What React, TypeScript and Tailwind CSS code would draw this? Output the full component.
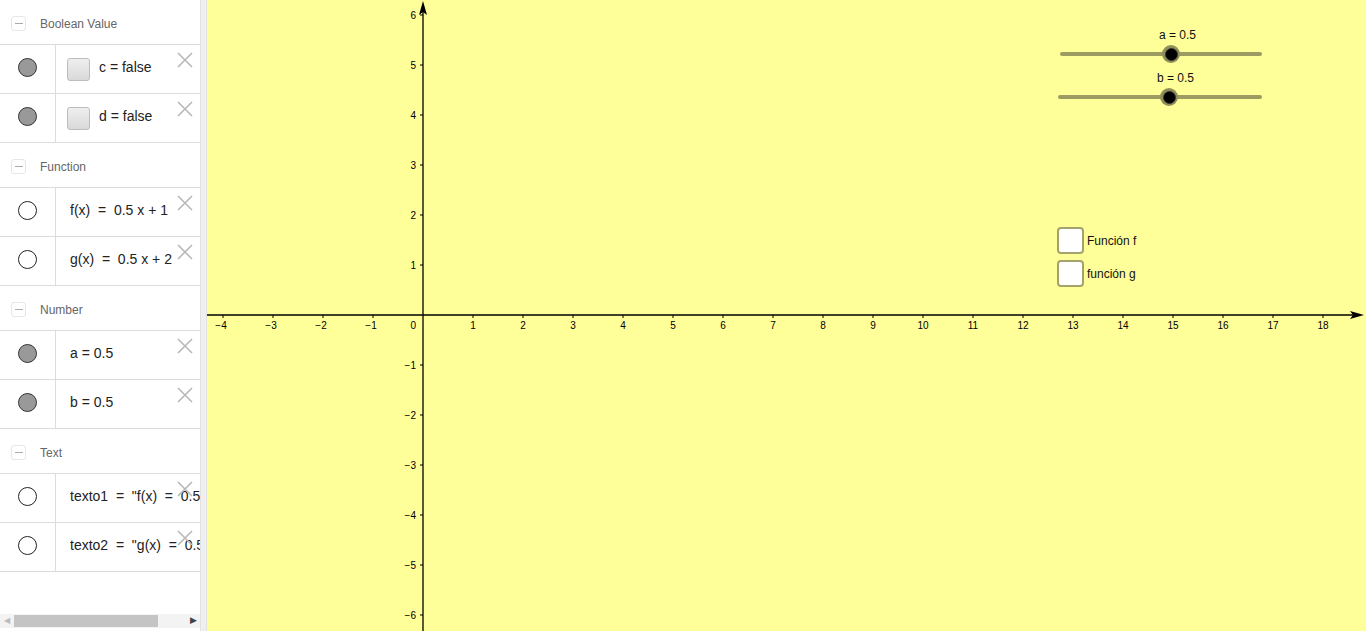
import React from 'react';

type Row = { kind: 'bool' | 'fill' | 'empty'; text: string };
type Group = { title: string; rows: Row[] };

const groups: Group[] = [
  {
    title: 'Boolean Value',
    rows: [
      { kind: 'bool', text: 'c = false' },
      { kind: 'bool', text: 'd = false' },
    ],
  },
  {
    title: 'Function',
    rows: [
      { kind: 'empty', text: 'f(x)  =  0.5 x + 1' },
      { kind: 'empty', text: 'g(x)  =  0.5 x + 2' },
    ],
  },
  {
    title: 'Number',
    rows: [
      { kind: 'fill', text: 'a = 0.5' },
      { kind: 'fill', text: 'b = 0.5' },
    ],
  },
  {
    title: 'Text',
    rows: [
      { kind: 'empty', text: 'texto1  =  "f(x)  =  0.5 x + 1"' },
      { kind: 'empty', text: 'texto2  =  "g(x)  =  0.5 x + 2"' },
    ],
  },
];

function CloseX() {
  return (
    <svg width="16" height="16" viewBox="0 0 16 16" className="absolute right-[7px] top-[7px]">
      <path d="M1 1 L15 15 M15 1 L1 15" stroke="#b8b8b8" strokeWidth="1.6" />
    </svg>
  );
}

function AlgebraRow({ row }: { row: Row }) {
  return (
    <div className="relative flex h-[49px] border-t border-[#dcdcdc]">
      <div className="flex w-[56px] shrink-0 items-center justify-center border-r border-[#dcdcdc] pb-[3px]">
        {row.kind === 'fill' || row.kind === 'bool' ? (
          <div className="h-[19px] w-[19px] rounded-full border border-[#333] bg-[#999]" />
        ) : (
          <div className="h-[19px] w-[19px] rounded-full border-[1.5px] border-[#222] bg-white" />
        )}
      </div>
      <div className="flex min-w-0 flex-1 items-center overflow-hidden whitespace-pre pb-[3px]">
        {row.kind === 'bool' ? (
          <>
            <div className="ml-[11px] mt-[3px] h-[23px] w-[23px] rounded-[3px] border border-[#bdbdbd] bg-gradient-to-b from-[#efefef] to-[#d9d9d9]" />
            <span className="ml-[9px] text-[14px] text-[#222]">{row.text}</span>
          </>
        ) : (
          <span className="ml-[14px] text-[14px] text-[#222]">{row.text}</span>
        )}
      </div>
      <CloseX />
    </div>
  );
}

function AlgebraView() {
  return (
    <div className="flex h-full w-[200px] shrink-0 flex-col bg-white">
      <div className="flex-1">
        {groups.map((g) => (
          <div key={g.title} className="border-b border-[#dcdcdc]">
            <div className="flex h-[44px] items-center pt-[3px]">
              <div className="ml-[11px] flex h-[15px] w-[15px] items-center justify-center rounded-[3px] border border-[#e6e6e6]">
                <div className="h-[1px] w-[8px] bg-[#aaa]" />
              </div>
              <span className="ml-[14px] text-[12px] text-[#666]">{g.title}</span>
            </div>
            {g.rows.map((r) => (
              <AlgebraRow key={r.text} row={r} />
            ))}
          </div>
        ))}
      </div>
      <div className="mb-[3px] flex h-[14px] items-center bg-[#f3f3f3]">
        <span className="w-[14px] text-center text-[8px] text-[#bbb]">◀</span>
        <div className="h-[12px] w-[144px] bg-[#c4c4c4]" />
        <div className="flex-1" />
        <span className="w-[14px] text-center text-[9px] text-[#444]">▶</span>
      </div>
    </div>
  );
}

const OX = 216;
const OY = 315;
const U = 50;

function Graph() {
  const xs = Array.from({ length: 23 }, (_, i) => i - 4).filter((n) => n !== 0);
  const ys = Array.from({ length: 13 }, (_, i) => i - 6).filter((n) => n !== 0);
  const lbl = (n: number) => (n < 0 ? '\u2212' + Math.abs(n) : String(n));
  return (
    <svg className="absolute inset-0 h-full w-full" style={{ fontFamily: '"Liberation Sans", Arial, sans-serif' }}>
      <line x1="0" y1={OY} x2="1148" y2={OY} stroke="#000" strokeWidth="1.3" />
      <polygon points={`1157,${OY} 1143,${OY - 4} 1146,${OY} 1143,${OY + 4}`} fill="#000" />
      <line x1={OX} y1="6" x2={OX} y2="631" stroke="#000" strokeWidth="1.3" />
      <polygon points={`${OX},1 ${OX - 4},15 ${OX},12 ${OX + 4},15`} fill="#000" />
      {xs.map((n) => {
        const x = OX + n * U;
        return (
          <g key={'x' + n}>
            <line x1={x} y1={OY} x2={x} y2={OY + 3} stroke="#000" strokeWidth="1" />
            <text x={n < 0 ? x - 2 : x} y={OY + 14} fontSize="10" textAnchor="middle" fill="#000">
              {lbl(n)}
            </text>
          </g>
        );
      })}
      {ys.map((n) => {
        const y = OY - n * U;
        return (
          <g key={'y' + n}>
            <line x1={OX - 3} y1={y} x2={OX} y2={y} stroke="#000" strokeWidth="1" />
            <text x={OX - 7} y={y + 4} fontSize="10" textAnchor="end" fill="#000">
              {lbl(n)}
            </text>
          </g>
        );
      })}
      <text x={OX - 7} y={OY + 14} fontSize="10" textAnchor="end" fill="#000">
        0
      </text>
    </svg>
  );
}

function Slider({ top, left, width, knob, label }: { top: number; left: number; width: number; knob: number; label: string }) {
  return (
    <div className="absolute" style={{ top, left, width }}>
      <div className="relative h-[40px]">
        <div className="absolute text-[12px] leading-[16px] text-[#111]" style={{ left: knob - 12, top: 0 }}>
          {label}
        </div>
        <div className="absolute left-0 right-0 top-[25px] h-[4px] rounded-full bg-[#9c9c62]" />
        <div
          className="absolute top-[18px] flex h-[18px] w-[18px] items-center justify-center rounded-full bg-[#8f8f5a]"
          style={{ left: knob - 9 }}
        >
          <div className="h-[13px] w-[13px] rounded-full border border-[#333] bg-black" />
        </div>
      </div>
    </div>
  );
}

function CheckBox({ top, left, label }: { top: number; left: number; label: string }) {
  return (
    <div className="absolute flex items-center" style={{ top, left }}>
      <div className="h-[27px] w-[27px] rounded-[4px] border-2 border-[#a3a36b] bg-white" />
      <span className="ml-[3px] text-[12px] text-[#111]">{label}</span>
    </div>
  );
}

export default function App() {
  return (
    <div
      className="flex h-[631px] w-full overflow-hidden"
      style={{ fontFamily: '"Liberation Sans", Arial, sans-serif' }}
    >
      <AlgebraView />
      <div className="w-[7px] shrink-0 border-x border-[#e2e2e2] bg-[#efefef]" />
      <div className="relative flex-1 bg-[#ffff99]">
        <Graph />
        <Slider top={27} left={853} width={202} knob={111} label="a = 0.5" />
        <Slider top={70} left={851} width={204} knob={111} label="b = 0.5" />
        <CheckBox top={227} left={850} label="Función f" />
        <CheckBox top={260} left={850} label="función g" />
      </div>
    </div>
  );
}
